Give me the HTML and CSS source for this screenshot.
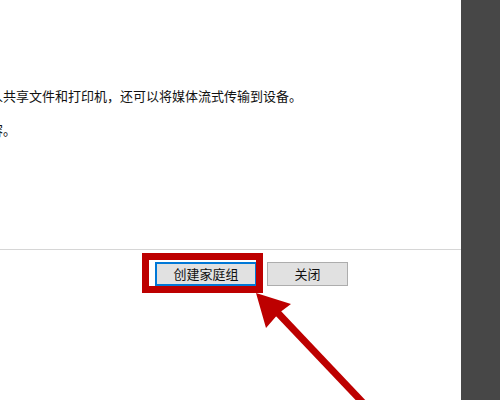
FILE: index.html
```html
<!DOCTYPE html>
<html lang="zh-CN">
<head>
<meta charset="utf-8">
<title>家庭组</title>
<link rel="stylesheet" href="styles.css">
</head>
<body>
<div class="screen">
  <div class="dialog">
    <div class="content">
      <p class="line line-one">人共享文件和打印机，还可以将媒体流式传输到设备。</p>
      <p class="line line-two">容。</p>
    </div>
    <div class="footer">
      <button class="btn btn-primary">创建家庭组</button>
      <button class="btn">关闭</button>
    </div>
    <div class="highlight"></div>
    <svg class="arrow" width="500" height="400" viewBox="0 0 500 400">
      <line x1="276" y1="311" x2="368" y2="408" stroke="#bd0000" stroke-width="7"/>
      <polygon points="256,293 291,304 279,313 266,328" fill="#bd0000"/>
    </svg>
  </div>
  <div class="side"></div>
</div>
</body>
</html>
```

FILE: styles.css
```css
html, body {
  margin: 0;
  padding: 0;
  width: 500px;
  height: 400px;
  overflow: hidden;
  background: #ffffff;
}

.screen {
  display: flex;
  width: 500px;
  height: 400px;
}

.dialog {
  position: relative;
  flex: 1;
  display: flex;
  flex-direction: column;
  background: #ffffff;
  overflow: hidden;
  font-family: "Noto Sans CJK SC", "Noto Sans", sans-serif;
  color: #111111;
}

.content {
  height: 249px;
  padding-top: 87px;
  box-sizing: border-box;
  display: flex;
  flex-direction: column;
  gap: 16px;
}

.line {
  margin: 0;
  font-size: 13px;
  line-height: 18px;
  white-space: nowrap;
}

.line-one {
  margin-left: -10px;
}

.line-two {
  margin-left: -10px;
}

.footer {
  border-top: 1px solid #d6d6d6;
  flex: 1;
  display: flex;
  align-items: flex-start;
  gap: 10px;
  padding: 12px 0 0 155px;
}

.btn {
  height: 24px;
  width: 81px;
  padding: 0;
  margin: 0;
  background: #e1e1e1;
  border: 1px solid #adadad;
  font-family: "Noto Sans CJK SC", "Noto Sans", sans-serif;
  font-size: 13px;
  line-height: 20px;
  color: #111111;
  box-sizing: border-box;
}

.btn-primary {
  width: 102px;
  border: 1px solid #0078d7;
  box-shadow: inset 0 0 0 1px #0078d7;
}

.highlight {
  position: absolute;
  left: 142px;
  top: 253px;
  width: 121px;
  height: 40px;
  border: 7px solid #bd0000;
  box-sizing: border-box;
}

.arrow {
  position: absolute;
  left: 0;
  top: 0;
}

.side {
  width: 39px;
  background: #474747;
}
```
